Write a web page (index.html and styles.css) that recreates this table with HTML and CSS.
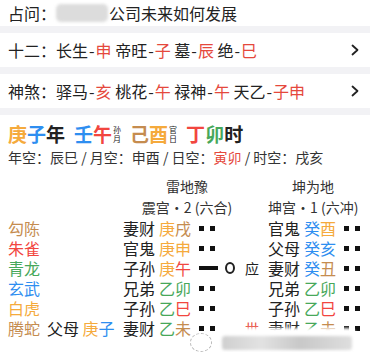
FILE: index.html
```html
<!DOCTYPE html>
<html lang="zh">
<head>
<meta charset="utf-8">
<link rel="stylesheet" href="styles.css">
</head>
<body>
<div class="q">占问：<span class="blur"></span>公司未来如何发展</div>
<div class="band"></div>
<div class="nav">
  <span>十二：长生<b class="dash">-</b><em class="r">申</em> 帝旺<b class="dash">-</b><em class="r">子</em> 墓<b class="dash">-</b><em class="r">辰</em> 绝<b class="dash">-</b><em class="r">巳</em></span>
  <svg class="chev" viewBox="0 0 8 12"><path d="M1.5 1.5 L6.5 6 L1.5 10.5" fill="none" stroke="#222" stroke-width="1.8" stroke-linecap="round" stroke-linejoin="round"/></svg>
</div>
<div class="band"></div>
<div class="nav">
  <span>神煞：驿马<b class="dash">-</b><em class="r">亥</em> 桃花<b class="dash">-</b><em class="r">午</em> 禄神<b class="dash">-</b><em class="r">午</em> 天乙<b class="dash">-</b><em class="r">子申</em></span>
  <svg class="chev" viewBox="0 0 8 12"><path d="M1.5 1.5 L6.5 6 L1.5 10.5" fill="none" stroke="#222" stroke-width="1.8" stroke-linecap="round" stroke-linejoin="round"/></svg>
</div>
<div class="band"></div>
<div class="main">
  <div class="gz">
    <span class="jin">庚</span><span class="shui">子</span><span>年</span>
    <span class="grp"><span class="shui">壬</span><span class="huo">午</span><span class="sub"><i>孙</i><i>月</i></span></span>
    <span class="grp"><span class="tu">己</span><span class="jin">酉</span><span class="sub"><i>官</i><i>日</i></span></span>
    <span class="grp"><span class="huo">丁</span><span class="mu">卯</span><span>时</span></span>
  </div>
  <div class="kong">年空：辰巳 / 月空：申酉 / 日空：<span class="r">寅卯</span> / 时空：戌亥</div>

  <div class="trow first">
    <span class="tb">雷地豫</span><span class="tv">坤为地</span>
  </div>
  <div class="trow">
    <span class="tb">震宫·2 (六合)</span><span class="tv">坤宫·1 (六冲)</span>
  </div>

  <div class="row">
    <span class="c-ls tu">勾陈</span><span class="c-fu"></span>
    <span class="c-lq">妻财</span><span class="c-gz"><span class="jin">庚</span><span class="tu">戌</span></span><span class="c-yao"><i class="yin"></i></span><span class="c-dong"></span><span class="c-sy"></span>
    <span class="c-lq">官鬼</span><span class="c-gz"><span class="shui">癸</span><span class="jin">酉</span></span><span class="c-yao"><i class="yin"></i></span>
  </div>
  <div class="row">
    <span class="c-ls huo">朱雀</span><span class="c-fu"></span>
    <span class="c-lq">官鬼</span><span class="c-gz jin">庚申</span><span class="c-yao"><i class="yin"></i></span><span class="c-dong"></span><span class="c-sy"></span>
    <span class="c-lq">父母</span><span class="c-gz shui">癸亥</span><span class="c-yao"><i class="yin"></i></span>
  </div>
  <div class="row">
    <span class="c-ls mu">青龙</span><span class="c-fu"></span>
    <span class="c-lq">子孙</span><span class="c-gz"><span class="jin">庚</span><span class="huo">午</span></span><span class="c-yao"><i class="yang"></i></span><span class="c-dong"><i class="ring"></i></span><span class="c-sy">应</span>
    <span class="c-lq">妻财</span><span class="c-gz"><span class="shui">癸</span><span class="tu">丑</span></span><span class="c-yao"><i class="yin"></i></span>
  </div>
  <div class="row">
    <span class="c-ls shui">玄武</span><span class="c-fu"></span>
    <span class="c-lq">兄弟</span><span class="c-gz mu">乙卯</span><span class="c-yao"><i class="yin"></i></span><span class="c-dong"></span><span class="c-sy"></span>
    <span class="c-lq">兄弟</span><span class="c-gz mu">乙卯</span><span class="c-yao"><i class="yin"></i></span>
  </div>
  <div class="row">
    <span class="c-ls jin">白虎</span><span class="c-fu"></span>
    <span class="c-lq">子孙</span><span class="c-gz"><span class="mu">乙</span><span class="huo">巳</span></span><span class="c-yao"><i class="yin"></i></span><span class="c-dong"></span><span class="c-sy"></span>
    <span class="c-lq">子孙</span><span class="c-gz"><span class="mu">乙</span><span class="huo">巳</span></span><span class="c-yao"><i class="yin"></i></span>
  </div>
  <div class="row">
    <span class="c-ls tu">腾蛇</span><span class="c-fu">父母 <span class="jin">庚</span><span class="shui">子</span></span>
    <span class="c-lq">妻财</span><span class="c-gz"><span class="mu">乙</span><span class="tu">未</span></span><span class="c-yao"><i class="yin"></i></span><span class="c-dong"></span><span class="c-sy shi">世</span>
    <span class="c-lq">妻财</span><span class="c-gz"><span class="mu">乙</span><span class="tu">未</span></span><span class="c-yao"><i class="yin"></i></span>
  </div>
</div>
<div class="wm">
  <span class="wm-icon"></span>
  <span class="wm-text"></span>
</div>
</body>
</html>
```

FILE: styles.css
```css
* { box-sizing: border-box; margin: 0; padding: 0; }
html, body { background: #fff; }
body {
  width: 370px;
  height: 352px;
  overflow: hidden;
  position: relative;
  font-family: "Noto Sans CJK SC", "Noto Sans", sans-serif;
  color: #222;
}
em, i, b { font-style: normal; font-weight: inherit; }
.r { color: #e5483c; }
.jin { color: #f5aa3c; }
.shui { color: #2e8ef0; }
.mu { color: #47a85a; }
.huo { color: #f2463f; }
.tu { color: #c58c4f; }

.band { height: 7px; background: #f2f2f5; }
.q {
  height: 26px;
  display: flex;
  align-items: center;
  padding-left: 8px;
  font-size: 16px;
  line-height: 26px;
}
.blur {
  display: inline-block;
  width: 52px;
  height: 18px;
  background: #dcdcdc;
  border-radius: 5px;
  filter: blur(1.5px);
  margin-right: 1px;
}
.nav {
  height: 34px;
  display: flex;
  align-items: center;
  justify-content: space-between;
  padding: 0 11px 0 8px;
  font-size: 16px;
  line-height: 22px;
}
.dash { margin: 0 1px; }
.chev { width: 8px; height: 12px; }

.main { padding: 7px 0 0 8px; }
.gz {
  display: flex;
  align-items: center;
  font-size: 19px;
  font-weight: bold;
  line-height: 24px;
  height: 24px;
}
.grp { display: inline-flex; align-items: center; margin-left: 9px; }
.sub {
  display: inline-flex;
  flex-direction: column;
  font-size: 8px;
  line-height: 9px;
  font-weight: normal;
  margin-left: 1px;
}
.kong {
  font-size: 14px;
  line-height: 18px;
  margin-top: 2px;
  color: #333;
  white-space: nowrap;
}

.trow {
  display: flex;
  height: 21px;
  align-items: center;
  font-size: 14px;
  line-height: 21px;
  color: #333;
  white-space: nowrap;
}
.trow.first { margin-top: 10px; }
.tb { margin-left: 115px; width: 128px; text-align: center; }
.tv { margin-left: 17px; width: 90px; text-align: center; }

.row {
  display: flex;
  align-items: center;
  height: 20px;
  font-size: 16px;
  line-height: 20px;
  white-space: nowrap;
}
.row > span { flex: none; }
.c-ls { width: 39px; }
.c-fu { width: 76px; }
.c-lq { width: 36px; }
.c-gz { width: 40px; }
.c-yao { width: 22px; display: flex; align-items: center; }
.c-dong { width: 18px; display: flex; align-items: center; padding-left: 4px; }
.c-sy { width: 29px; font-size: 14px; padding-left: 6px; }
.shi { color: #e5483c; }

.yin { display: block; width: 16px; height: 5px;
  background: linear-gradient(90deg, #111 0 5px, transparent 5px 11px, #111 11px 16px); }
.yang { display: block; width: 19px; height: 4px; background: #111; }
.ring { display: block; width: 10px; height: 12px; border: 2px solid #222; border-radius: 50%; }

.wm {
  position: absolute;
  left: 190px;
  top: 333px;
  width: 175px;
  height: 19px;
  display: flex;
  align-items: center;
}
.wm-icon {
  width: 22px;
  height: 19px;
  border-radius: 50%;
  background: #fff;
  border: 1px dashed #bbb;
  flex: none;
}
.wm-text {
  margin-left: 10px;
  width: 130px;
  height: 14px;
  background: linear-gradient(90deg, #cfcfcf, #e2e2e2 30%, #c8c8c8 60%, #dedede);
  filter: blur(1.5px);
  border-radius: 3px;
  box-shadow: 0 -4px 0 4px #fff;
}
```
